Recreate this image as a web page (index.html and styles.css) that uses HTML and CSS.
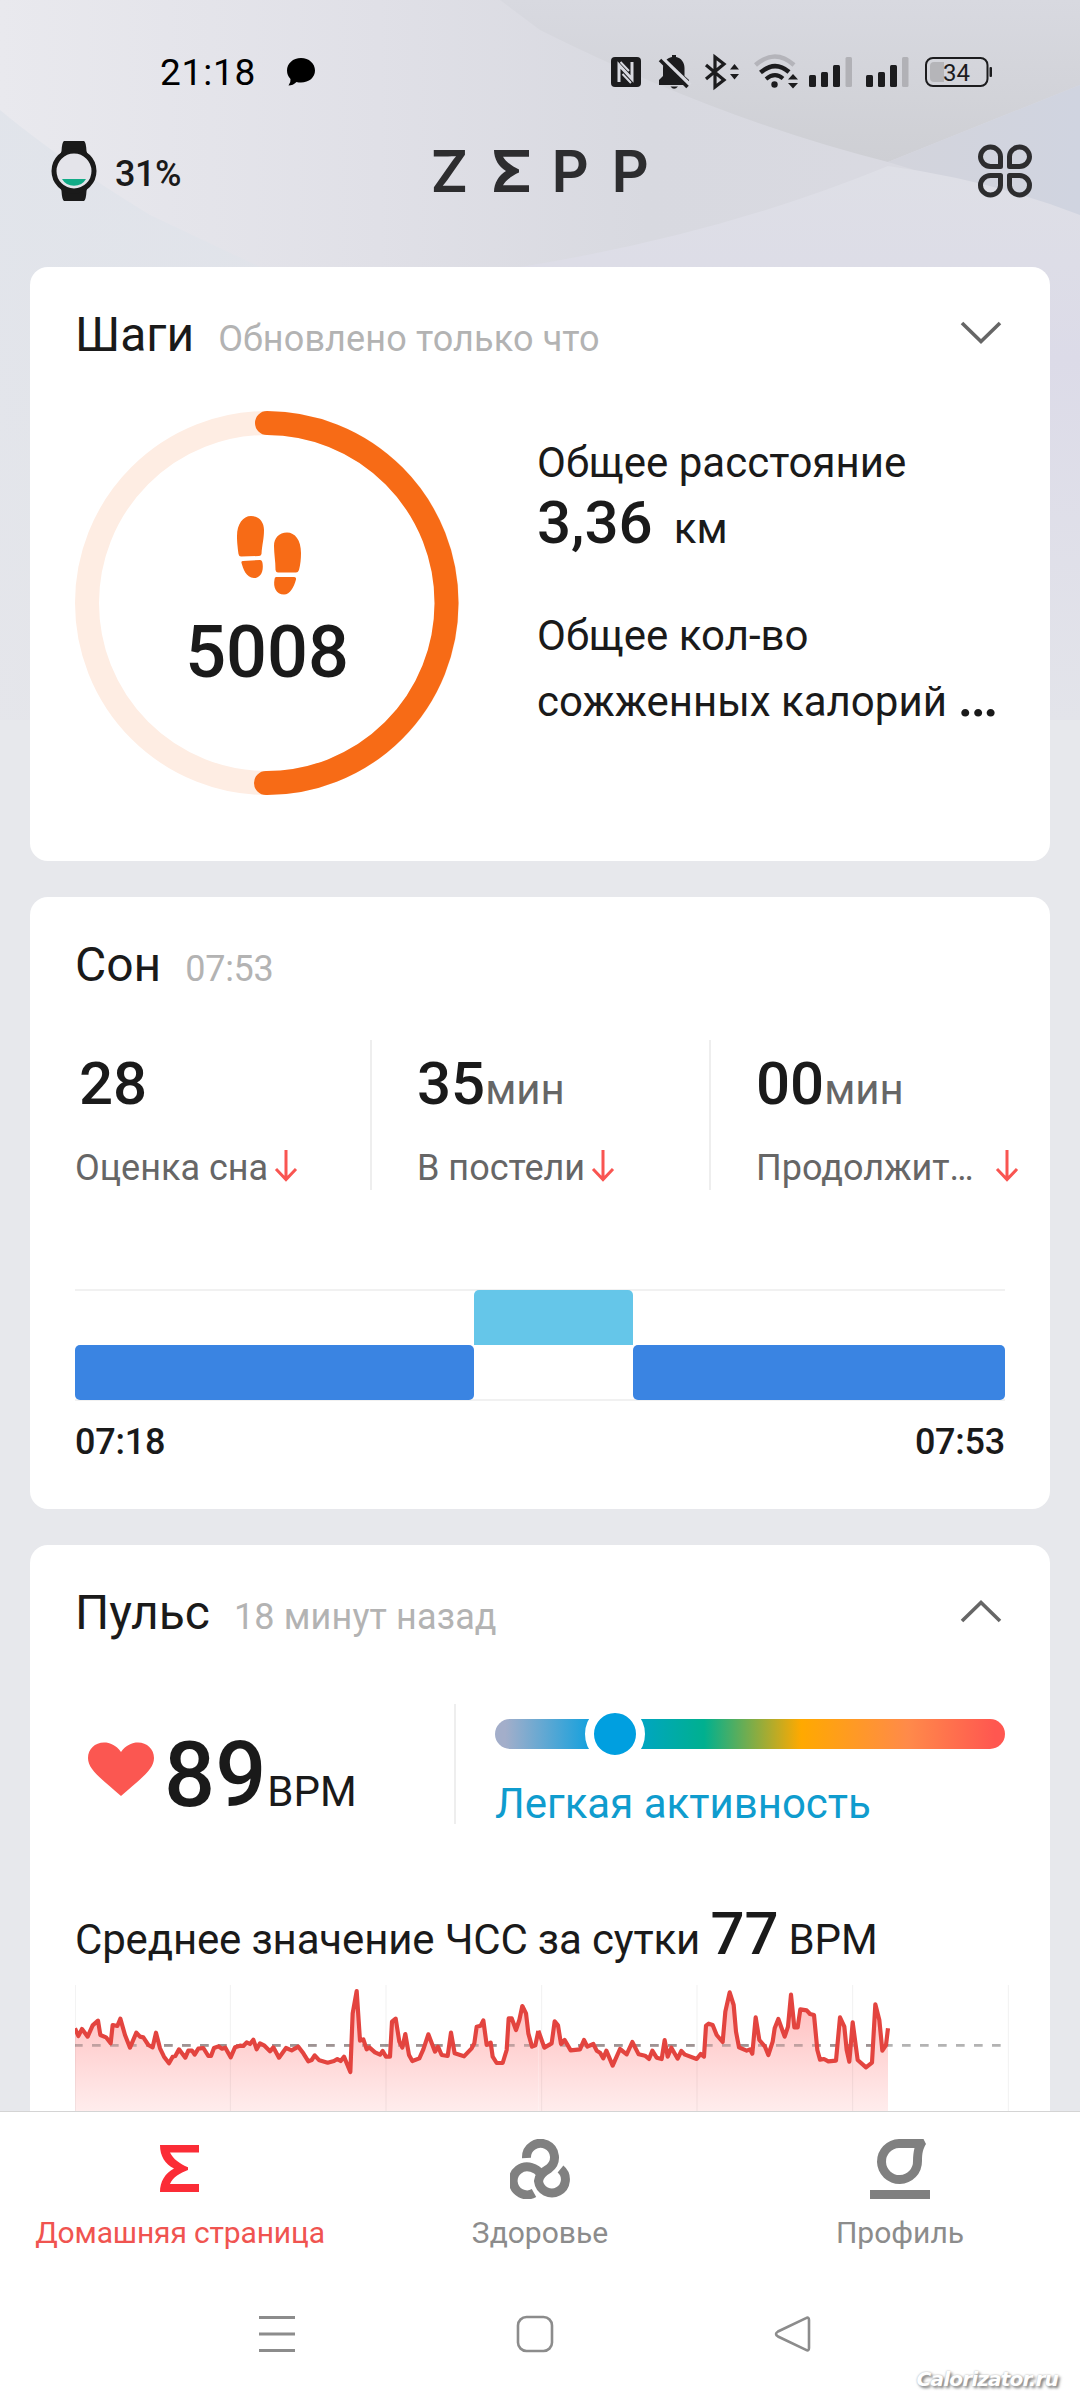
FILE: index.html
```html
<!DOCTYPE html>
<html lang="ru">
<head>
<meta charset="utf-8">
<title>Zepp</title>
<link rel="stylesheet" href="styles.css">
</head>
<body>
<svg class="backdrop" width="1080" height="720" viewBox="0 0 1080 720">
  <defs>
    <linearGradient id="sky" x1="0" y1="0" x2="1" y2="0"><stop offset="0" stop-color="#e9e9ee"/><stop offset=".35" stop-color="#e0e0e7"/><stop offset=".6" stop-color="#d8d9e0"/><stop offset="1" stop-color="#dadae2"/></linearGradient>
    <linearGradient id="fold" x1="0" y1="0" x2="0" y2="1"><stop offset="0" stop-color="#d8d9e0"/><stop offset="1" stop-color="#cecfd4"/></linearGradient>
    <linearGradient id="wedge" x1="0" y1="0" x2="0" y2="1"><stop offset="0" stop-color="#dedfe6"/><stop offset=".35" stop-color="#dcdbe8"/><stop offset="1" stop-color="#e3e4ea"/></linearGradient>
    <linearGradient id="left" x1="0" y1="0" x2="0" y2="1"><stop offset="0" stop-color="#dfe3ea"/><stop offset="1" stop-color="#e4e5ea"/></linearGradient>
    <linearGradient id="right" x1="0" y1="0" x2="1" y2="0"><stop offset="0" stop-color="#d3d4dc"/><stop offset="1" stop-color="#d0d4e0"/></linearGradient>
  </defs>
  <rect width="1080" height="720" fill="url(#sky)"/>
  <path d="M0 110Q60 160 150 215L260 267V720H0Z" fill="url(#left)" opacity=".8"/>
  <path d="M540 30Q720 120 888 162L1080 85V0H500Z" fill="url(#fold)"/>
  <path d="M888 162L1080 85V220Z" fill="url(#right)"/>
  <path d="M520 267Q720 235 888 166Q990 180 1080 215V720H520Z" fill="url(#wedge)"/>
</svg>

<div class="screen">
  <div class="status">
    <div class="status-left">
      <span class="clock">21:18</span>
      <svg width="28" height="28" viewBox="0 0 28 28"><path d="M14 0C22 0 28 5.500 28 12.500S22 24.500 14 24.500Q11.500 24.500 9.500 24Q6 27.500 1.500 27.500Q4 24.500 3.500 21Q0 17.500 0 12.500C0 5.500 6 0 14 0Z" fill="#000"/></svg>
    </div>
    <div class="status-right">
      <svg width="39" height="42" viewBox="611 51 39 42"><rect x="611" y="57" width="30" height="30" rx="4" fill="#1c1c1e"/><path d="M619 82V65L632 79V62" fill="none" stroke="#d8d9e0" stroke-width="3"/><path d="M620.500 62L629 71M622.500 74L631 83" stroke="#d8d9e0" stroke-width="2"/></svg>
      <svg width="47" height="42" viewBox="650 51 47 42"><path d="M659 85V80L663 76V68C663 62 667 58 672 57V55H676V57C681 58 684.500 62 684.500 68V76L689 80V85Z" fill="#1c1c1e"/><path d="M670.500 86.500H678Q674 91 670.500 86.500Z" fill="#1c1c1e"/><path d="M663 59L690 85" stroke="#d8d9df" stroke-width="4"/><path d="M660 60L687.500 87" stroke="#1c1c1e" stroke-width="3.500"/></svg>
      <svg width="49" height="42" viewBox="697 51 49 42"><path d="M706 65L724 80L715 87V57L724 64L706 79" fill="none" stroke="#1c1c1e" stroke-width="3.200"/><path d="M730 69.500L734.500 64L739 69.500ZM730 74L734.500 79.500L739 74Z" fill="#1c1c1e"/></svg>
      <svg width="57" height="42" viewBox="746 51 57 42"><g fill="none"><path d="M755.500 65Q775 48 794 65" stroke="#b4b4ba" stroke-width="4.500"/><path d="M760.500 72.500Q775 60 789 72" stroke="#1c1c1e" stroke-width="4.500"/><path d="M766 79Q775 71.500 783 78.500" stroke="#1c1c1e" stroke-width="4"/></g><circle cx="774.500" cy="84.500" r="3.200" fill="#1c1c1e"/><path d="M788 79.500L793 74L798 79.500ZM788 83L793 88.500L798 83Z" fill="#1c1c1e"/></svg>
      <svg width="56" height="42" viewBox="803 51 56 42"><g fill="#1c1c1e"><rect x="809" y="75" width="7" height="12" rx="1.500"/><rect x="821" y="72" width="7" height="15" rx="1.500"/><rect x="833" y="65" width="7" height="22" rx="1.500"/></g><rect x="845.500" y="57" width="6.500" height="30" rx="1.500" fill="#b1b1b6"/></svg>
      <svg width="58" height="42" viewBox="859 51 58 42"><g fill="#1c1c1e"><rect x="866" y="75" width="7" height="12" rx="1.500"/><rect x="878" y="72" width="7" height="15" rx="1.500"/><rect x="890" y="65" width="7" height="22" rx="1.500"/></g><rect x="902" y="57" width="6.500" height="30" rx="1.500" fill="#b1b1b6"/></svg>
      <svg width="78" height="42" viewBox="917 51 78 42"><rect x="926" y="58" width="61.500" height="28" rx="7" fill="none" stroke="#1c1c1e" stroke-width="2"/><path d="M944 62H934Q930 62 930 66V78Q930 82 934 82H944Z" fill="#b5b5b9"/><rect x="989.500" y="67" width="2.500" height="10" rx="1" fill="#1c1c1e"/><text x="956.500" y="81" class="battery">34</text></svg>
    </div>
  </div>

  <header class="topbar">
    <div class="device">
      <svg width="46" height="60" viewBox="0 0 46 60"><path d="M13 0H33Q35 1 35.500 10Q36 14 39 16H7Q10 14 10.500 10Q11 1 13 0ZM13 60H33Q35 59 35.500 50Q36 46 39 44H7Q10 46 10.500 50Q11 59 13 60Z" fill="#1a1a1a"/><circle cx="23" cy="30" r="20" fill="#e4e4ea" stroke="#1a1a1a" stroke-width="5"/><path d="M11 38H35Q31 44.800 23 44.800T11 38Z" fill="#12ab87"/></svg>
      <span>31%</span>
    </div>
    <div class="brand">
      <span>Z</span>
      <svg width="35" height="42" viewBox="0 0 35 42"><path d="M0 0H35V6.700H9C12 12 19 17 25 19.500V22.500C19 25 12 30 9 35.300H35V42H0C0 33 5 25 12 21C5 17 0 9 0 0Z" fill="#2d2d2f"/></svg>
      <span>P</span><span>P</span>
    </div>
    <svg class="apps" width="56" height="56" viewBox="977 143 56 56"><g fill="none" stroke="#2d2d2f" stroke-width="5" stroke-linejoin="round"><path d="M1000.500 166.500H990.500A10 9.750 0 1 1 1000.500 156.500Z"/><path d="M1009.500 166.500H1019.500A10 9.750 0 1 0 1009.500 156.500Z"/><path d="M1000.500 175.500H990.500A10 9.750 0 1 0 1000.500 185.500Z"/><path d="M1009.500 175.500H1019.500A10 9.750 0 1 1 1009.500 185.500Z"/></g></svg>
  </header>

  <main class="cards">
    <section class="card steps">
      <div class="card-head">
        <h2>Шаги</h2><span class="note">Обновлено только что</span>
        <svg class="chev" width="42" height="26" viewBox="0 0 42 26"><path d="M2 3L21 21.500L40 3" fill="none" stroke="#666" stroke-width="3.600"/></svg>
      </div>
      <div class="steps-body">
        <div class="ring">
          <svg width="384" height="384" viewBox="0 0 384 384"><circle cx="192" cy="192" r="180" fill="none" stroke="#feede3" stroke-width="24"/><path d="M192 12A180 180 0 0 1 191 372" fill="none" stroke="#f76b16" stroke-width="24" stroke-linecap="round"/></svg>
          <div class="ring-label">
            <svg width="64" height="79" viewBox="0 0 64 79"><g fill="#f76b16"><path d="M14 0C22 0 27 6 27 14C27 23 25 29 24.500 38Q24 40 22 40L4 40.500Q2 40.500 1.500 38C.5 30 0 26 0 20C0 8 6 0 14 0ZM6 45L23 44Q25 44 25.500 47C27 56 23 62 17 62C9 62 6 52 4.500 47Q4 45 6 45Z"/><path d="M50 16.500C42 16.500 37 22 37 30C37 38 38.500 45 38.500 54Q39 56.500 41 56.500H59Q61 56.500 62 54C63.500 48 64 43 64 37C64 24 58 16.500 50 16.500ZM39 61H57Q59.500 61 59 63.500C57 71 53 78.500 47 78.500C39 78.500 36 71 37.500 63.500Q37.500 61 39 61Z"/></g></svg>
            <strong>5008</strong>
          </div>
        </div>
        <div class="totals">
          <div class="line">Общее расстояние</div>
          <div class="amount"><b>3,36</b><span>км</span></div>
          <div class="line">Общее кол-во<br>сожженных калорий <b>…</b></div>
        </div>
      </div>
    </section>

    <section class="card sleep">
      <div class="card-head"><h2>Сон</h2><span class="note time">07:53</span></div>
      <div class="stats">
        <div class="stat first"><div class="value"><b>28</b></div><div class="label">Оценка сна<svg class="down" width="24" height="32" viewBox="0 0 24 32"><path d="M12 0V29M2 19L12 29.500L22 19" fill="none" stroke="#f95551" stroke-width="3"/></svg></div></div>
        <div class="stat"><div class="value"><b>35</b>мин</div><div class="label">В постели<svg class="down" width="24" height="32" viewBox="0 0 24 32"><path d="M12 0V29M2 19L12 29.500L22 19" fill="none" stroke="#f95551" stroke-width="3"/></svg></div></div>
        <div class="stat"><div class="value"><b>00</b>мин</div><div class="label wide">Продолжит…<svg class="down" width="24" height="32" viewBox="0 0 24 32"><path d="M12 0V29M2 19L12 29.500L22 19" fill="none" stroke="#f95551" stroke-width="3"/></svg></div></div>
      </div>
      <div class="phases">
        <div class="phase deep"></div><div class="phase light"></div><div class="phase deep"></div>
      </div>
      <div class="range"><span>07:18</span><span>07:53</span></div>
    </section>

    <section class="card pulse">
      <div class="card-head">
        <h2>Пульс</h2><span class="note">18 минут назад</span>
        <svg class="chev" width="42" height="26" viewBox="0 0 42 26"><path d="M2 23L21 4.500L40 23" fill="none" stroke="#666" stroke-width="3.600"/></svg>
      </div>
      <div class="pulse-body">
        <div class="now">
          <svg width="66" height="54" viewBox="0 0 66 54"><path d="M33 10C28 3 22 .5 16 .5C7 .5 0 7 0 16C0 28 14 37 33 54C52 37 66 28 66 16C66 7 59 .5 50 .5C44 .5 38 3 33 10Z" fill="#fb5751"/></svg>
          <b>89</b><span>BPM</span>
        </div>
        <div class="zone">
          <div class="scale"><i class="knob"></i></div>
          <div class="zone-name">Легкая активность</div>
        </div>
      </div>
      <div class="average">Среднее значение ЧСС за сутки <b>77</b> BPM</div>
      <svg class="chart" width="935" height="127" viewBox="45 75 2805 381">
        <defs><linearGradient id="fill" gradientUnits="userSpaceOnUse" x1="0" y1="90" x2="0" y2="455"><stop offset="0" stop-color="#ffb9b9"/><stop offset=".5" stop-color="#ffd4d4"/><stop offset="1" stop-color="#ffeded"/></linearGradient></defs>
        <path d="M45 256H2825" stroke="#b3b3b3" stroke-width="8" stroke-dasharray="26 28" stroke-dashoffset="3"/>
        <g fill="url(#fill)">
          <path d="M45 205 55 228 66 207 83 230 98 196 114 182 121 225 138 232 152 250 158 195 172 198 181 176 195 225 210 263 229 218 240 230 250 232 265 255 278 262 288 218 300 265 312 290 327 310 338 290 346 288 357 268 376 293 385 272 396 272 404 284 415 266 430 264 445 288 453 288 462 264 475 259 486 266 496 263 512 292 525 262 540 257 550 258 560 247 570 252 580 239 590 268 600 250 612 256 630 274 640 262 657 293 678 264 695 271 715 260 730 280 745 304 755 300 764 286 778 301 803 308 822 303 832 297 842 303 852 290 871 336 878 160 890 93 900 242 910 238 920 268 928 262 945 277 960 284 968 273 978 290 990 290 996 185 1007 176 1018 245 1027 263 1036 222 1047 285 1057 303 1078 295 1090 268 1105 223 1125 275 1134 260 1145 285 1163 288 1173 218 1184 280 1212 289 1235 265 1243 250 1250 200 1262 197 1270 181 1280 255 1292 248 1298 290 1310 309 1328 309 1340 270 1346 175 1355 175 1368 210 1378 180 1387 138 1398 160 1405 220 1416 260 1426 256 1435 213V460H45Z"/>
          <path transform="translate(1410 0)" d="M25 212 43 263 65 250 74 184 84 196 93 252 104 240 122 271 150 268 162 240 172 260 190 252 200 272 210 278 220 295 229 272 248 317 270 267 290 283 307 246 326 283 345 287 357 297 367 272 380 293 395 297 404 240 413 290 424 263 443 296 454 273 465 284 500 297 512 282 522 290 528 197 536 191 548 195 560 225 578 246 586 155 599 97 611 135 618 215 627 262 650 272 660 268 667 281 677 172 688 240 705 260 715 285 728 245 734 205 745 177 764 230 774 200 783 104 793 202 803 202 811 148 830 151 840 162 852 165 862 270 870 299 882 297 895 304 918 302 930 172 943 200 950 270 958 305 968 187 983 300 1008 322 1026 308 1036 133 1048 180 1057 272 1068 255 1074 205V460H25Z"/>
        </g>
        <path d="M45 256H2485" stroke="#8c7878" stroke-opacity=".55" stroke-width="8" stroke-dasharray="26 28" stroke-dashoffset="3"/>
        <path d="M46 75V460M511 75V460M978 75V460M1445 75V460M1911 75V460M2378 75V460M2845 75V460" stroke="#000" stroke-opacity=".06" stroke-width="3"/>
        <g fill="none" stroke="#e3443f" stroke-width="12.500" stroke-linejoin="round">
          <path d="M45 205 55 228 66 207 83 230 98 196 114 182 121 225 138 232 152 250 158 195 172 198 181 176 195 225 210 263 229 218 240 230 250 232 265 255 278 262 288 218 300 265 312 290 327 310 338 290 346 288 357 268 376 293 385 272 396 272 404 284 415 266 430 264 445 288 453 288 462 264 475 259 486 266 496 263 512 292 525 262 540 257 550 258 560 247 570 252 580 239 590 268 600 250 612 256 630 274 640 262 657 293 678 264 695 271 715 260 730 280 745 304 755 300 764 286 778 301 803 308 822 303 832 297 842 303 852 290 871 336 878 160 890 93 900 242 910 238 920 268 928 262 945 277 960 284 968 273 978 290 990 290 996 185 1007 176 1018 245 1027 263 1036 222 1047 285 1057 303 1078 295 1090 268 1105 223 1125 275 1134 260 1145 285 1163 288 1173 218 1184 280 1212 289 1235 265 1243 250 1250 200 1262 197 1270 181 1280 255 1292 248 1298 290 1310 309 1328 309 1340 270 1346 175 1355 175 1368 210 1378 180 1387 138 1398 160 1405 220 1416 260 1426 256 1435 213"/>
          <path transform="translate(1410 0)" d="M25 212 43 263 65 250 74 184 84 196 93 252 104 240 122 271 150 268 162 240 172 260 190 252 200 272 210 278 220 295 229 272 248 317 270 267 290 283 307 246 326 283 345 287 357 297 367 272 380 293 395 297 404 240 413 290 424 263 443 296 454 273 465 284 500 297 512 282 522 290 528 197 536 191 548 195 560 225 578 246 586 155 599 97 611 135 618 215 627 262 650 272 660 268 667 281 677 172 688 240 705 260 715 285 728 245 734 205 745 177 764 230 774 200 783 104 793 202 803 202 811 148 830 151 840 162 852 165 862 270 870 299 882 297 895 304 918 302 930 172 943 200 950 270 958 305 968 187 983 300 1008 322 1026 308 1036 133 1048 180 1057 272 1068 255 1074 205"/>
        </g>
      </svg>
    </section>
  </main>

  <nav class="tabs">
    <a class="tab active"><svg width="60" height="60" viewBox="0 0 60 60"><path d="M10 6H49V13.500H20C23 20 30 25 38 28.200V31C30 34 23 38 20 45H49V53H10C10 43 15 34 24 29.500C15 25 10 17 10 6Z" fill="#fb2c36"/></svg><span>Домашняя страница</span></a>
    <a class="tab"><svg width="60" height="60" viewBox="510 2139 60 60"><g fill="none" stroke="#808080" stroke-width="9"><path d="M526.500 2158A14 14 0 1 1 549 2168.500C542 2172.500 539 2176 538.500 2181A13.500 13.500 0 1 0 560.500 2169"/><path d="M534 2193A14 14 0 1 1 531.500 2167.500Q537 2169 541 2174"/></g></svg><span>Здоровье</span></a>
    <a class="tab"><svg width="60" height="60" viewBox="870 2139 60 60"><path fill-rule="evenodd" d="M899 2139H923.500L926 2144C923 2149 922 2153 922 2161A22.500 22.500 0 1 1 899 2139ZM899 2148H914.500C913.500 2152 913 2156 913 2161A13.500 13.500 0 1 1 899 2148ZM870 2190H930V2199H870Z" fill="#808080"/></svg><span>Профиль</span></a>
  </nav>
  <div class="system">
    <svg width="38" height="38" viewBox="0 0 38 38"><path d="M1 2.500H37M1 19H37M1 35.500H37" stroke="#8c8c8c" stroke-width="3"/></svg>
    <svg width="38" height="38" viewBox="0 0 38 38"><rect x="2" y="2" width="34" height="34" rx="8.500" fill="none" stroke="#8c8c8c" stroke-width="2.600"/></svg>
    <svg width="38" height="38" viewBox="0 0 38 38"><path d="M32 3.200Q35 1.500 35 5V33Q35 36.500 32 34.800L4 21.500Q0 19 4 16.500Z" fill="none" stroke="#8c8c8c" stroke-width="2.600"/></svg>
  </div>
</div>
<div class="watermark">Calorizator.ru</div>
</body>
</html>
```
FILE: styles.css
```css
* { box-sizing: border-box; }
body {
  margin: 0;
  width: 1080px;
  height: 2400px;
  overflow: hidden;
  position: relative;
  background: #e7e8ec;
  color: #1a1a1a;
  font-family: Roboto, "Liberation Sans", sans-serif;
}
svg { display: block; flex: none; }
b, strong { font-weight: 500; }
.backdrop { position: absolute; left: 0; top: 0; }
.screen { position: relative; display: flex; flex-direction: column; height: 2400px; }

.status {
  height: 144px;
  padding: 0 85px 0 160px;
  display: flex;
  align-items: center;
  justify-content: space-between;
}
.status-left { display: flex; align-items: center; gap: 31px; }
.clock { font-size: 37px; letter-spacing: 0.8px; color: #000; }
.status-right { display: flex; }
.battery { font-size: 24px; text-anchor: middle; fill: #1c1c1e; }

.topbar {
  height: 54px;
  margin: -3px 0 72px;
  padding: 0 47px 0 51px;
  display: grid;
  grid-template-columns: 1fr auto 1fr;
  align-items: center;
}
.device { display: flex; align-items: center; gap: 18px; font-size: 36px; font-weight: 500; letter-spacing: -0.4px; }
.device span { padding-top: 5px; }
.brand { display: flex; align-items: center; height: 54px; color: #2d2d2f; font: 600 58px/54px Inter, Roboto, sans-serif; }
.brand span { width: 60px; }
.brand span:first-child { width: 63px; margin-left: -3px; }
.brand svg { margin-right: 23px; }
.brand span:last-child { width: 39px; }
.apps { justify-self: end; }

.cards {
  height: 1844px;
  padding: 0 30px;
  display: flex;
  flex-direction: column;
  gap: 36px;
  overflow: hidden;
}
.card { flex: none; background: #fff; border-radius: 18px; padding: 38px 45px 0; }
.card-head { display: flex; align-items: baseline; height: 60px; }
.card-head h2 { margin: 0; font-size: 48px; line-height: 60px; font-weight: 400; }
.note { margin-left: 24px; font-size: 36px; letter-spacing: 0.14px; color: #b3b3b3; }
.time { letter-spacing: -0.3px; }
.chev { margin: 15px 3px 0 auto; align-self: flex-start; }

.steps { height: 594px; }
.steps-body { display: flex; gap: 78px; margin-top: 46px; }
.ring { display: grid; flex: none; }
.ring > * { grid-area: 1 / 1; }
.ring-label { display: flex; flex-direction: column; align-items: center; padding-top: 105px; }
.ring-label svg { margin-left: 3px; }
.ring-label strong { font-size: 72px; line-height: 80px; margin-top: 18px; }
.totals { padding-top: 19px; font-size: 42px; white-space: nowrap; }
.line { line-height: 66px; }
.line b { font-size: 58px; line-height: 0; }
.amount { display: flex; align-items: baseline; gap: 21px; height: 53px; line-height: 53px; margin-bottom: 54px; }
.amount b { font-size: 60px; }

.sleep { height: 612px; }
.stats { display: flex; margin: 45px -45px 0 0; height: 150px; }
.stat { flex: none; width: 339px; padding-left: 45px; border-left: 2px solid #eee; color: #666; white-space: nowrap; }
.stat.first { width: 295px; padding-left: 0; border-left: 0; }
.value { font-size: 42px; line-height: 60px; height: 60px; margin-top: 14px; }
.value b { font-size: 60px; color: #1a1a1a; }
.first .value { padding-left: 4px; }
.label { display: flex; align-items: center; font-size: 36px; line-height: 42px; margin-top: 33px; }
.down { margin: 0 0 4px 6px; }
.wide .down { margin-left: 21px; }
.phases {
  display: grid;
  grid-template-columns: 398.500px 159.500px 372px;
  height: 112px;
  margin-top: 99px;
  border-top: 2px solid #f1f1f1;
  border-bottom: 2px solid #f1f1f1;
}
.phase { height: 55px; border-radius: 5px; }
.deep { background: #3a84e2; align-self: end; margin-bottom: -1px; }
.light { background: #65c6e9; border-radius: 5px 5px 0 0; margin-top: -1px; }
.range { display: flex; justify-content: space-between; font-size: 36px; font-weight: 500; letter-spacing: -0.25px; line-height: 42px; margin-top: 20px; }

.pulse { height: 640px; }
.pulse-body { display: flex; height: 120px; margin-top: 61px; }
.now { width: 381px; padding-left: 13px; border-right: 2px solid #eee; display: flex; align-items: baseline; line-height: 144px; }
.now svg { align-self: flex-start; margin-top: 38px; }
.now b { font-size: 90px; margin-left: 10px; }
.now span { font-size: 42px; margin-left: 1px; }
.zone { flex: 1; padding: 15px 0 0 39px; }
.scale {
  position: relative;
  height: 30px;
  border-radius: 15px;
  background: linear-gradient(90deg, #a3aeca 2%, #009fe0 21%, #00b08f 41%, #ffa900 60%, #ff8a4a 81%, #ff5750 98%);
}
.knob { position: absolute; left: 90px; top: -15px; width: 60px; height: 60px; border: 9px solid #fff; border-radius: 50%; background: #009fe0; }
.zone-name { margin-top: 30px; font-size: 42px; line-height: 50px; color: #0f9cce; }
.average { margin-top: 86px; font-size: 42px; line-height: 60px; letter-spacing: -0.16px; white-space: nowrap; height: 60px; }
.average b { font-size: 60px; line-height: 0; }
.chart { margin-top: 15px; }

.tabs { height: 144px; border-top: 1px solid #d4d4d4; background: #fff; display: flex; }
.tab { flex: 1; display: flex; flex-direction: column; align-items: center; padding-top: 27px; font-size: 30px; line-height: 40px; color: #8c8c8c; }
.tab span { margin-top: 14px; white-space: nowrap; }
.tab.active { color: #f05450; letter-spacing: -0.15px; }
.system { flex: 1; background: #fff; display: flex; gap: 220px; padding: 60px 0 0 258px; }
.watermark {
  position: absolute;
  right: 22px;
  bottom: 8px;
  font: italic bold 20px/26px "DejaVu Sans", sans-serif;
  letter-spacing: -0.8px;
  color: #fff;
  text-shadow: 0 0 2px #aaa, 2px 2px 3px #777;
}
```
